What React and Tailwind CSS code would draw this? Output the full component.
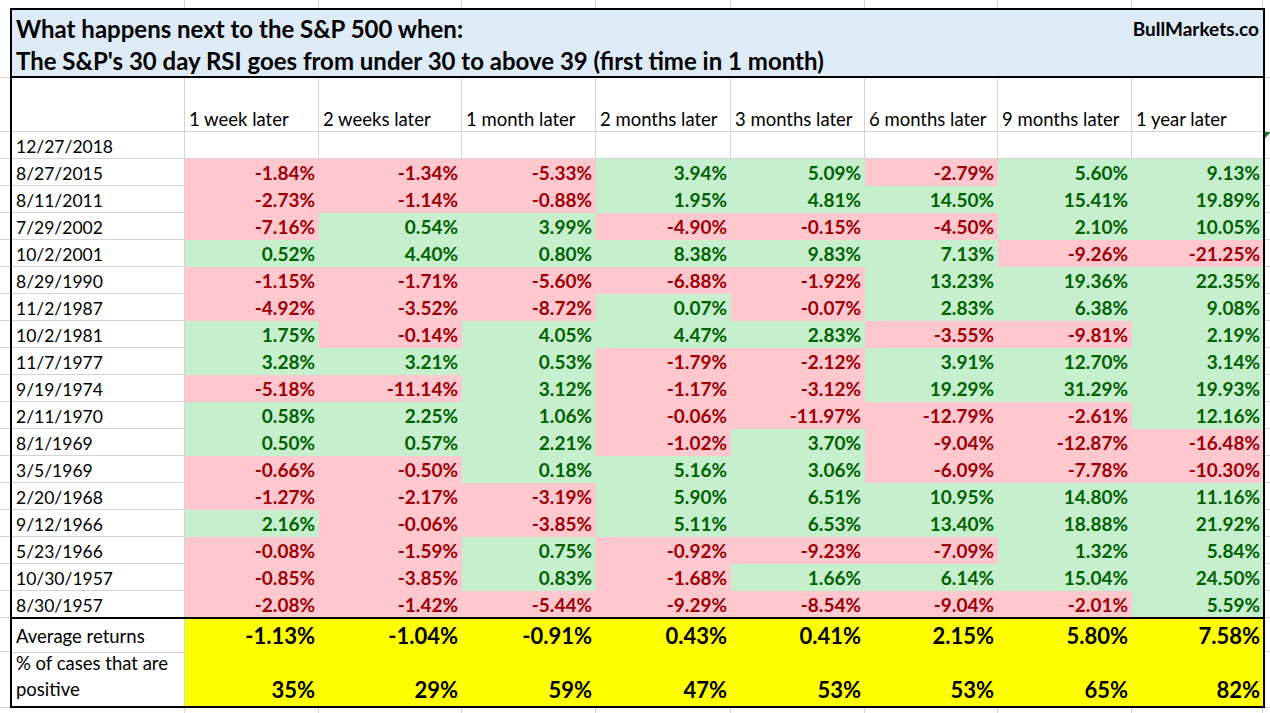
import React from "react";

const W = [
  "w-[173px]",
  "w-[134px]",
  "w-[143px]",
  "w-[134px]",
  "w-[135px]",
  "w-[134px]",
  "w-[133px]",
  "w-[134px]",
  "w-[131px]",
];

const HEADERS = [
  "1 week later",
  "2 weeks later",
  "1 month later",
  "2 months later",
  "3 months later",
  "6 months later",
  "9 months later",
  "1 year later",
];

const ROWS = [
  ["8/27/2015", [-1.84, -1.34, -5.33, 3.94, 5.09, -2.79, 5.6, 9.13]],
  ["8/11/2011", [-2.73, -1.14, -0.88, 1.95, 4.81, 14.5, 15.41, 19.89]],
  ["7/29/2002", [-7.16, 0.54, 3.99, -4.9, -0.15, -4.5, 2.1, 10.05]],
  ["10/2/2001", [0.52, 4.4, 0.8, 8.38, 9.83, 7.13, -9.26, -21.25]],
  ["8/29/1990", [-1.15, -1.71, -5.6, -6.88, -1.92, 13.23, 19.36, 22.35]],
  ["11/2/1987", [-4.92, -3.52, -8.72, 0.07, -0.07, 2.83, 6.38, 9.08]],
  ["10/2/1981", [1.75, -0.14, 4.05, 4.47, 2.83, -3.55, -9.81, 2.19]],
  ["11/7/1977", [3.28, 3.21, 0.53, -1.79, -2.12, 3.91, 12.7, 3.14]],
  ["9/19/1974", [-5.18, -11.14, 3.12, -1.17, -3.12, 19.29, 31.29, 19.93]],
  ["2/11/1970", [0.58, 2.25, 1.06, -0.06, -11.97, -12.79, -2.61, 12.16]],
  ["8/1/1969", [0.5, 0.57, 2.21, -1.02, 3.7, -9.04, -12.87, -16.48]],
  ["3/5/1969", [-0.66, -0.5, 0.18, 5.16, 3.06, -6.09, -7.78, -10.3]],
  ["2/20/1968", [-1.27, -2.17, -3.19, 5.9, 6.51, 10.95, 14.8, 11.16]],
  ["9/12/1966", [2.16, -0.06, -3.85, 5.11, 6.53, 13.4, 18.88, 21.92]],
  ["5/23/1966", [-0.08, -1.59, 0.75, -0.92, -9.23, -7.09, 1.32, 5.84]],
  ["10/30/1957", [-0.85, -3.85, 0.83, -1.68, 1.66, 6.14, 15.04, 24.5]],
  ["8/30/1957", [-2.08, -1.42, -5.44, -9.29, -8.54, -9.04, -2.01, 5.59]],
];

const AVG = [-1.13, -1.04, -0.91, 0.43, 0.41, 2.15, 5.8, 7.58];
const POS = [35, 29, 59, 47, 53, 53, 65, 82];

const pct = (v) => `${v.toFixed(2)}%`;

// one spreadsheet cell; i = column index
const Cell = ({ i, className = "", children }) => (
  <div
    className={`${W[i]} shrink-0 h-full flex items-end ${i < 8 ? "border-r" : ""} ${className}`}
  >
    {children}
  </div>
);

const GridStrip = ({ h }) => (
  <div className={`flex ${h}`}>
    <div className="w-[12px] shrink-0" />
    {W.map((w, i) => (
      <div key={i} className={`${w} shrink-0 border-r border-[#d4d4d4]`} />
    ))}
  </div>
);

const Gutter = ({ width, mark }) => (
  <div className={`${width} shrink-0 flex flex-col`}>
    <div className="h-[70px] border-b border-[#d4d4d4]" />
    <div className="h-[54px] border-b border-[#d4d4d4]" />
    {Array.from({ length: 18 }).map((_, i) => (
      <div key={i} className="h-[27px] border-b border-[#d4d4d4] relative">
        {mark && i === 0 && (
          <svg className="absolute left-0 top-0" width="6" height="6" viewBox="0 0 6 6">
            <polygon points="0,0 6,0 0,6" fill="#1e7b34" />
          </svg>
        )}
      </div>
    ))}
    <div className="h-[34px] border-b border-[#d4d4d4]" />
    <div className="h-[56px] border-b border-[#d4d4d4]" />
  </div>
);

export default function App() {
  return (
    <div className="w-[1270px] h-[713px] bg-white overflow-hidden font-['Lato',sans-serif] text-black">
      <GridStrip h="h-[8px]" />
      <div className="flex">
        <Gutter width="w-[10px]" />
        <div className="w-[1255px] shrink-0 border-2 border-black flex flex-col">
          {/* title block */}
          <div className="h-[68px] bg-[#ddebf7] border-b-2 border-black flex flex-col">
            <div className="h-[33px] flex items-end justify-between leading-none">
              <span className="pl-[4px] pb-[2px] text-[24px] font-bold">
                What happens next to the S&amp;P 500 when:
              </span>
              <span className="pr-[4px] pb-[5px] text-[19px] font-bold">BullMarkets.co</span>
            </div>
            <div className="h-[33px] flex items-end leading-none">
              <span className="pl-[4px] pb-[3px] text-[24px] font-bold">
                The S&amp;P's 30 day RSI goes from under 30 to above 39 (first time in 1 month)
              </span>
            </div>
          </div>

          {/* column headers */}
          <div className="flex h-[54px] text-[18.5px] leading-none">
            <Cell i={0} className="border-b border-[#d4d4d4]" />
            {HEADERS.map((h, k) => (
              <Cell key={k} i={k + 1} className="border-b border-[#d4d4d4] pl-[4px] pb-[3px] whitespace-nowrap">
                {h}
              </Cell>
            ))}
          </div>

          <div className="flex h-[27px] text-[17.5px] leading-none">
            <Cell i={0} className="border-b border-[#d4d4d4] pl-[4px] pb-[3px]">
              12/27/2018
            </Cell>
            {HEADERS.map((_, k) => (
              <Cell key={k} i={k + 1} className="border-b border-[#d4d4d4]" />
            ))}
          </div>

          {ROWS.map(([date, vals], r) => {
            const last = r === ROWS.length - 1;
            return (
              <div key={date} className={`flex ${last ? "h-[26px]" : "h-[27px]"} leading-none`}>
                <Cell i={0} className={`${last ? "" : "border-b"} border-[#d4d4d4] pl-[4px] pb-[3px] text-[17.5px]`}>
                  {date}
                </Cell>
                {vals.map((v, k) => (
                  <Cell
                    key={k}
                    i={k + 1}
                    className={`${last ? "" : "border-b"} justify-end pr-[3px] pb-[3px] text-[19px] font-bold ${
                      v < 0
                        ? "bg-[#ffc7ce] border-[#ffc7ce] text-[#9c0006]"
                        : "bg-[#c6efce] border-[#c6efce] text-[#006100]"
                    }`}
                  >
                    {pct(v)}
                  </Cell>
                ))}
              </div>
            );
          })}

          {/* summary rows */}
          <div className="border-t-2 border-black">
            <div className="flex h-[34px] leading-none">
              <Cell i={0} className="border-b border-[#d4d4d4] pl-[4px] pb-[7px] text-[18.5px]">
                Average returns
              </Cell>
              {AVG.map((v, k) => (
                <Cell
                  key={k}
                  i={k + 1}
                  className="border-b bg-[#ffff00] border-[#ffff00] justify-end pr-[3px] pb-[5px] text-[22px] font-bold"
                >
                  {pct(v)}
                </Cell>
              ))}
            </div>
            <div className="flex h-[53px]">
              <Cell i={0} className="border-[#d4d4d4] pl-[4px] pb-[4px] text-[18.5px] leading-[26px]">
                <span>
                  % of cases that are
                  <br />
                  positive
                </span>
              </Cell>
              {POS.map((v, k) => (
                <Cell
                  key={k}
                  i={k + 1}
                  className="bg-[#ffff00] border-[#ffff00] justify-end pr-[3px] pb-[5px] text-[22px] font-bold leading-none"
                >
                  {v}%
                </Cell>
              ))}
            </div>
          </div>
        </div>
        <Gutter width="w-[5px]" mark />
      </div>
      <GridStrip h="h-[5px]" />
    </div>
  );
}
